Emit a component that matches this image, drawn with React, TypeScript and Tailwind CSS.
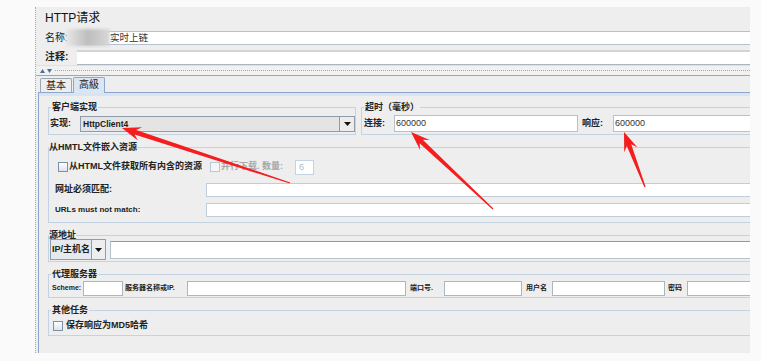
import React from "react"

function arrow(tx: number, ty: number, px: number, py: number) {
  const dx = px - tx
  const dy = py - ty
  const len = Math.hypot(dx, dy)
  const ux = dx / len
  const uy = dy / len
  const nx = -uy
  const ny = ux
  const L = 19
  const W = 7
  const w = 2.4
  const t = 0.6
  const b1x = px - ux * (L - 5)
  const b1y = py - uy * (L - 5)
  const bx = px - ux * L
  const by = py - uy * L
  const pts = [
    [tx + nx * t, ty + ny * t],
    [b1x + nx * w, b1y + ny * w],
    [bx + nx * W, by + ny * W],
    [px, py],
    [bx - nx * W, by - ny * W],
    [b1x - nx * w, b1y - ny * w],
    [tx - nx * t, ty - ny * t],
  ]
  return pts.map((p) => p[0].toFixed(1) + "," + p[1].toFixed(1)).join(" ")
}

function Caret() {
  return (
    <svg width="7" height="4" viewBox="0 0 7 4">
      <path d="M0 0H7L3.5 4Z" fill="#111" />
    </svg>
  )
}

function Check({ disabled }: { disabled?: boolean }) {
  return (
    <div
      className={
        disabled
          ? "w-[10px] h-[10px] border border-[#b9c7d6] bg-[#f3f5f8]"
          : "w-[10px] h-[10px] border border-[#7d91a6] bg-linear-to-b from-[#ffffff] to-[#dbe3ec]"
      }
    />
  )
}

function Group({
  title,
  className = "",
  legendClass = "",
  children,
}: {
  title: string
  className?: string
  legendClass?: string
  children?: React.ReactNode
}) {
  return (
    <fieldset className={"border border-[#c3d3e4] " + className}>
      <legend className={"text-[9px] font-bold text-[#222] " + legendClass}>{title}</legend>
      {children}
    </fieldset>
  )
}

export default function App() {
  return (
    <div className="relative w-[761px] h-[361px] bg-[#fafafa] overflow-hidden font-['Liberation_Sans','Noto_Sans_CJK_SC',sans-serif] text-[#222]">
      <div className="pt-[7px] pl-[35px]">
        <div className="w-[715px] h-[346px] bg-[#eeeeee] border-l border-dotted border-[#a9a9a9] flex flex-col overflow-hidden">
          <div className="h-[22px] pl-[9px] text-[12px] leading-[22px] text-[#111]">HTTP请求</div>

          <div className="mt-[2px] h-[14px] flex">
            <div className="w-[41px] pl-[9px] text-[10px] leading-[14px]">名称:</div>
            <div className="flex-1 bg-white border-y border-[#b4c1ce] pl-[33px] text-[9.5px] leading-[12px] text-[#333]">
              实时上链
            </div>
          </div>

          <div className="mt-[5px] h-[15px] flex">
            <div className="w-[41px] pl-[9px] text-[10px] leading-[14px] font-bold">注释:</div>
            <div className="flex-1 bg-white border-t-2 border-t-[#d0d5da] border-b border-b-[#a9b5c1]" />
          </div>

          <div className="h-[11px] bg-[#f1f1f1] border-t border-[#e0e0e0] border-b border-b-[#9ea7b0] flex items-center pl-[4px] gap-[2px]">
            <svg width="13" height="5" viewBox="0 0 13 5">
              <path d="M0 5L2.5 1L5 5Z" fill="#4f6f99" />
              <path d="M7 1H12L9.5 5Z" fill="#4f6f99" />
            </svg>
            <div className="flex-1 border-t border-dotted border-[#a8a8a8]" />
          </div>

          <div className="h-[16px] flex items-end pl-[4px] gap-[1px]">
            <div className="w-[32px] h-[14px] border border-b-0 border-[#9aa6b2] rounded-t-[2px] text-[10px] leading-[13px] text-center">
              基本
            </div>
            <div className="relative z-10 -mb-[1px] w-[32px] h-[16px] bg-[#dbe6f5] border border-b-0 border-[#8fa6cc] rounded-t-[2px] text-[10px] leading-[14px] text-center">
              高級
            </div>
          </div>

          <div className="flex-1 ml-[2px] border-t border-l border-[#8fa6cc] flex flex-col">
            <div className="h-[3px] bg-[#d9e4f3]" />
            <div className="pl-[9px] pt-[5px] w-[730px]">
              <div className="flex">
                <Group title="客户端实现" className="w-[311px] pb-[2px]" legendClass="ml-[2px] px-[1px] leading-[13px]">
                  <div className="mt-[2px] h-[16px] flex items-center">
                    <div className="w-[31px] pl-[1px] text-[9px] font-bold">实现:</div>
                    <div className="w-[275px] h-[16px] border border-[#8e9cab] bg-[#e4e4e4] flex">
                      <div className="flex-1 pl-[2px] text-[8.5px] font-bold leading-[14px] text-[#1a1a1a]">HttpClient4</div>
                      <div className="w-[15px] border-l border-[#8e9cab] bg-[#ececec] flex items-center justify-center">
                        <Caret />
                      </div>
                    </div>
                  </div>
                </Group>
                <Group title="超时（毫秒）" className="ml-[5px] flex-1 pb-[2px]" legendClass="ml-[2px] px-[1px] leading-[13px]">
                  <div className="mt-[1px] h-[17px] flex items-center">
                    <div className="w-[32px] pl-[2px] text-[9px] font-bold">连接:</div>
                    <div className="w-[184px] h-[17px] bg-white border border-[#b4c1ce] pl-[1px] text-[9px] leading-[15px] text-[#333]">
                      600000
                    </div>
                    <div className="w-[35px] pl-[4px] text-[9px] font-bold">响应:</div>
                    <div className="w-[200px] h-[17px] bg-white border border-[#b4c1ce] pl-[1px] text-[9px] leading-[15px] text-[#333]">
                      600000
                    </div>
                  </div>
                </Group>
              </div>

              <Group title="从HMTL文件嵌入资源" className="mt-[6px] pb-[5px]" legendClass="leading-[13px]">
                <div className="mt-[5px] h-[16px] flex items-center pl-[9px]">
                  <div className="w-[152px] flex items-center">
                    <Check />
                    <span className="ml-[1px] text-[9px] font-bold">从HTML文件获取所有内含的资源</span>
                  </div>
                  <Check disabled />
                  <span className="ml-[1px] w-[74px] text-[9px] font-bold text-[#a9a9a9]">并行下载. 数量:</span>
                  <div className="w-[19px] h-[15px] bg-white border border-[#c3d3e3] pl-[3px] text-[9px] leading-[13px] text-[#a8bccf]">
                    6
                  </div>
                </div>
                <div className="mt-[8px] h-[14px] flex items-center">
                  <div className="w-[157px] pl-[6px] text-[9px] font-bold">网址必须匹配:</div>
                  <div className="flex-1 h-[14px] bg-white border border-[#c0cedc]" />
                </div>
                <div className="mt-[6px] h-[14px] flex items-center">
                  <div className="w-[157px] pl-[6px] text-[8px] font-bold">URLs must not match:</div>
                  <div className="flex-1 h-[14px] bg-white border border-[#c0cedc]" />
                </div>
              </Group>

              <Group title="源地址" className="mt-[6px] pb-[1px]" legendClass="leading-[12px]">
                <div className="-mt-[2px] h-[21px] flex items-center pl-[1px]">
                  <div className="w-[56px] h-[21px] border border-[#8e9cab] bg-[#e6eaee] flex">
                    <div className="flex-1 pl-[1px] text-[9px] font-bold leading-[19px]">IP/主机名</div>
                    <div className="w-[14px] border-l border-[#8e9cab] bg-[#eceff2] flex items-center justify-center">
                      <Caret />
                    </div>
                  </div>
                  <div className="ml-[4px] flex-1 h-[18px] bg-white border border-[#b4c1ce] border-t-[#8f9aa5]" />
                </div>
              </Group>

              <Group title="代理服务器" className="mt-[6px] pb-[1px]" legendClass="ml-[2px] px-[1px] leading-[12px]">
                <div className="mt-[1px] h-[15px] flex items-center text-[7px] font-bold">
                  <div className="w-[34px] pl-[3px]">Scheme:</div>
                  <div className="w-[40px] h-[15px] bg-white border border-[#a9b6c3]" />
                  <div className="w-[64px] pl-[2px]">服务器名称或IP.</div>
                  <div className="w-[219px] h-[15px] bg-white border border-[#a9b6c3]" />
                  <div className="w-[38px] pl-[4px]">端口号.</div>
                  <div className="w-[78px] h-[15px] bg-white border border-[#a9b6c3]" />
                  <div className="w-[30px] pl-[4px]">用户名</div>
                  <div className="w-[113px] h-[15px] bg-white border border-[#a9b6c3]" />
                  <div className="w-[22px] pl-[3px]">密码</div>
                  <div className="w-[120px] h-[15px] bg-white border border-[#a9b6c3]" />
                </div>
              </Group>

              <Group title="其他任务" className="mt-[6px] pb-[2px]" legendClass="ml-[2px] px-[1px] leading-[12px]">
                <div className="mt-[3px] h-[14px] flex items-center pl-[4px]">
                  <Check />
                  <span className="ml-[3px] text-[9px] font-bold">保存响应为MD5哈希</span>
                </div>
              </Group>
            </div>
          </div>
        </div>
      </div>

      <div className="absolute left-[66px] top-[29px] w-[44px] h-[17px] bg-linear-to-r from-[#e8e8e8] via-[#bdbdbd] to-[#d9d9d9] blur-[1.5px]" />

      <svg className="absolute inset-0 pointer-events-none" width="761" height="361">
        <polygon points={arrow(290, 183, 122, 128)} fill="#f51d1d" />
        <polygon points={arrow(493, 209, 411, 132)} fill="#f51d1d" />
        <polygon points={arrow(645, 187, 624, 132)} fill="#f51d1d" />
      </svg>
    </div>
  )
}
